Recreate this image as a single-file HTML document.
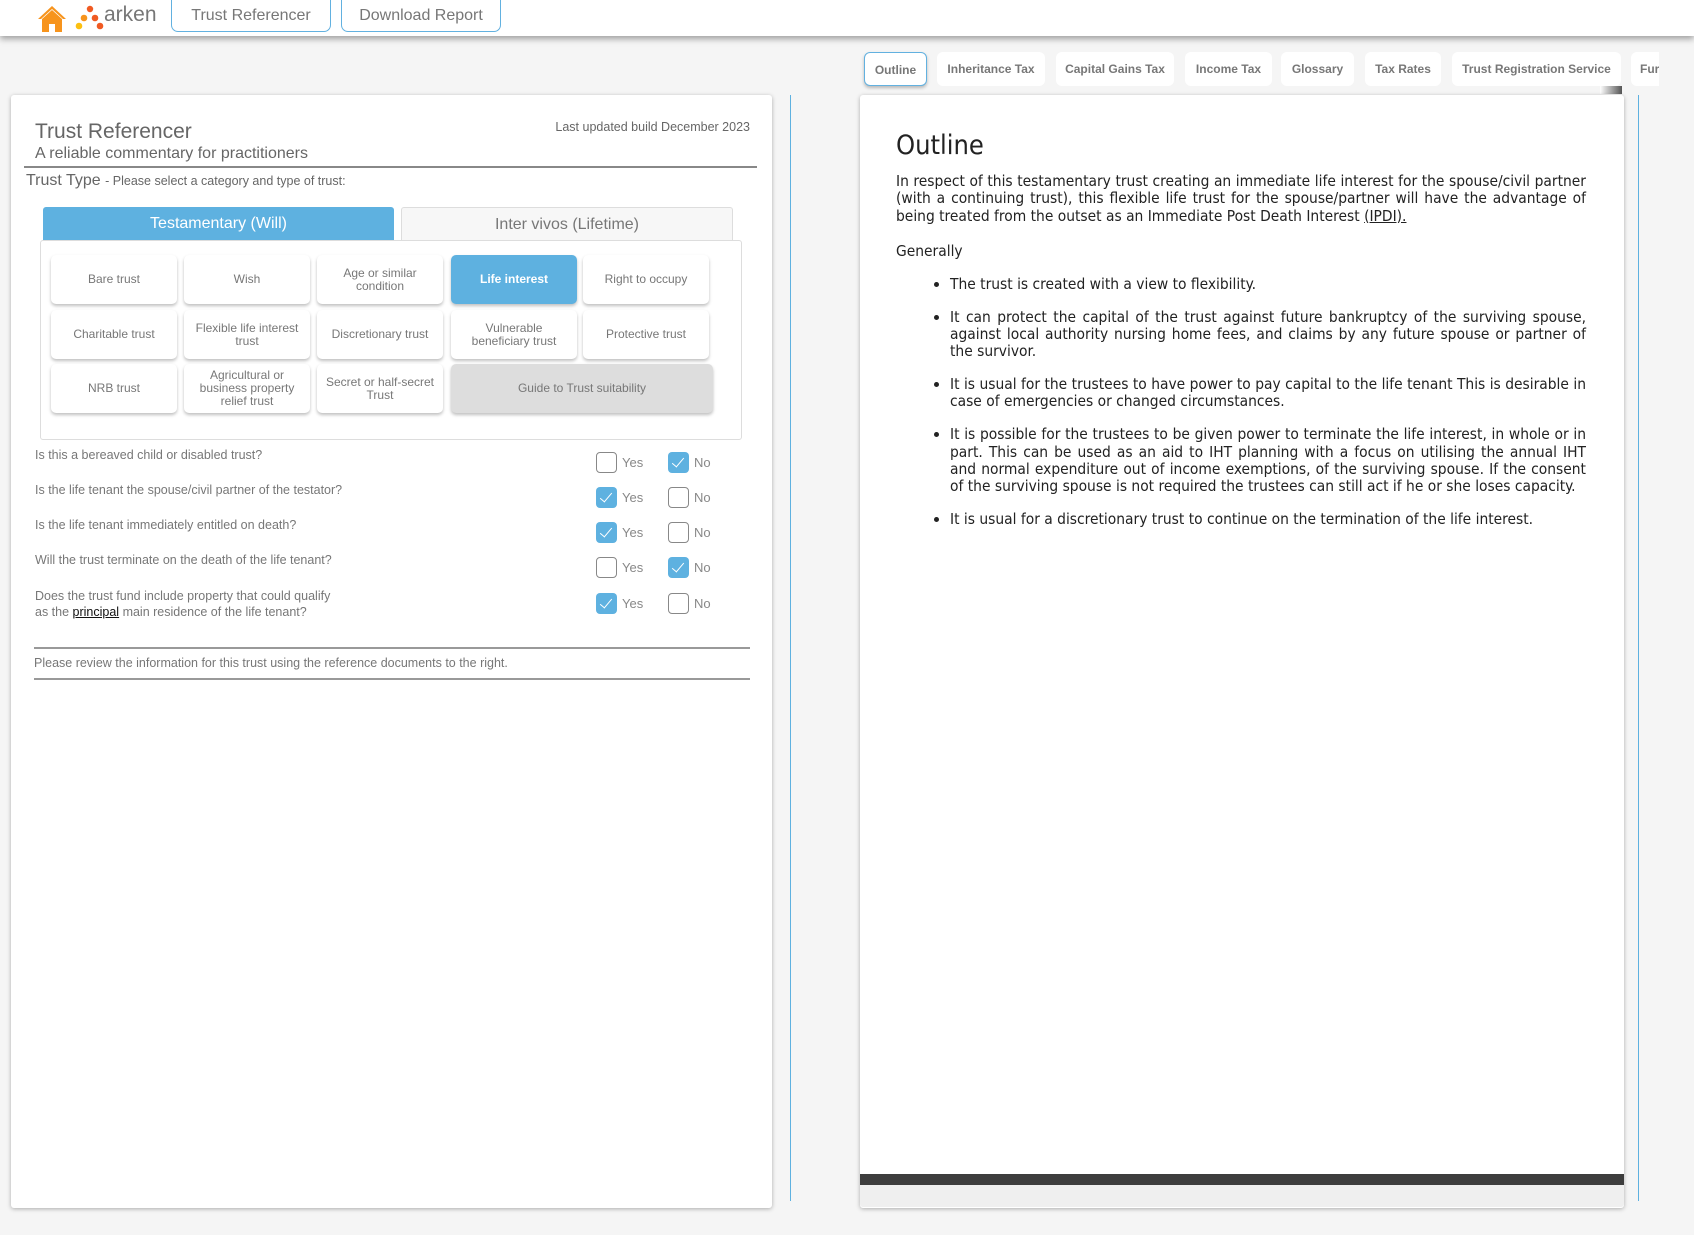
<!DOCTYPE html>
<html><head><meta charset="utf-8"><style>
*{box-sizing:border-box;margin:0;padding:0}
body{width:1694px;height:1235px;background:#f5f5f5;font-family:"Liberation Sans",Arial,sans-serif;position:relative;overflow:hidden;color:#666}
.abs{position:absolute}
.hdr{left:0;top:0;width:1694px;height:36px;background:#fff;box-shadow:0 3px 6px rgba(0,0,0,.35)}
.hb{top:0;height:32px;border:1px solid #62b1e0;border-radius:0 0 7px 7px;border-top:none;font-size:16px;color:#777;text-align:center;line-height:31px;background:#fff}
.panel{background:#fff;box-shadow:0 1px 4px rgba(0,0,0,.3);border-radius:3px}
.tb{height:49px;width:126px;background:#fff;border-radius:5px;box-shadow:0 2px 3px rgba(0,0,0,.25);font-size:12px;color:#777;display:flex;align-items:center;justify-content:center;text-align:center;line-height:13px;padding:0 4px}
.q{left:35px;font-size:12.5px;color:#777}
.cb{width:21px;height:21px;border:1.5px solid #888;border-radius:4px;background:#fff}
.cb.on{background:#5eb1e0;border:none}
.cb.on::after{content:"";position:absolute;left:7px;top:3px;width:5px;height:11px;border:solid #fff;border-width:0 1.6px 1.6px 0;transform:rotate(40deg)}
.lbl{font-size:13px;color:#888}
.rt{top:52px;height:34px;background:#fff;border-radius:6px;font-size:12px;font-weight:bold;color:#777;text-align:center;line-height:34px;white-space:nowrap;overflow:hidden}
.doc{font-family:"DejaVu Sans Condensed","Liberation Sans Narrow","DejaVu Sans",sans-serif;color:#222;font-size:15.4px;line-height:17.3px;text-align:justify}
ul.doc{list-style:disc}
ul.doc li{margin-bottom:15.5px}
</style></head><body>
<div class="abs hdr"></div>
<svg class="abs" style="left:37px;top:4px" width="30" height="28" viewBox="0 0 30 28"><path d="M15 2 L1 15 L4 15 L15 5 L26 15 L29 15 Z" fill="#f7941d"/><path d="M5 15 L15 6 L25 15 L25 28 L18 28 L18 20 L12 20 L12 28 L5 28 Z" fill="#f7941d"/></svg>
<svg class="abs" style="left:75px;top:5px" width="30" height="26" viewBox="0 0 30 26"><circle cx="15" cy="4" r="3.2" fill="#f05a22"/><circle cx="9" cy="13" r="3.3" fill="#f7941d"/><circle cx="20" cy="13" r="3.3" fill="#f05a22"/><circle cx="4" cy="21" r="3.3" fill="#fcc010"/><circle cx="25" cy="21" r="3.3" fill="#f05a22"/></svg>
<div class="abs" style="left:104px;top:3px;font-size:21px;color:#777">arken</div>
<div class="abs hb" style="left:171px;width:160px">Trust Referencer</div>
<div class="abs hb" style="left:341px;width:160px">Download Report</div>

<div class="abs panel" style="left:11px;top:95px;width:761px;height:1113px"></div>
<div class="abs" style="left:35px;top:120px;font-size:21px;color:#666">Trust Referencer</div>
<div class="abs" style="left:35px;top:145px;font-size:16px;color:#666">A reliable commentary for practitioners</div>
<div class="abs" style="left:549px;top:120px;font-size:12.5px;color:#666;width:201px;text-align:right;white-space:nowrap">Last updated build December 2023</div>
<div class="abs" style="left:24px;top:166px;width:733px;height:2px;background:#888"></div>
<div class="abs" style="left:26px;top:172px;font-size:16px;color:#666;white-space:nowrap">Trust Type <span style="font-size:12.5px">- Please select a category and type of trust:</span></div>
<div class="abs" style="left:43px;top:207px;width:351px;height:33px;background:#5eb1e0;border-radius:3px 3px 0 0;color:#fff;font-size:16px;text-align:center;line-height:33px">Testamentary (Will)</div>
<div class="abs" style="left:401px;top:207px;width:332px;height:33px;background:#f7f7f7;border:1px solid #ddd;border-bottom:none;border-radius:3px 3px 0 0;color:#777;font-size:16px;text-align:center;line-height:33px">Inter vivos (Lifetime)</div>
<div class="abs" style="left:40px;top:240px;width:702px;height:200px;border:1px solid #ddd;border-radius:3px;background:#fff"></div>
<div class="abs tb" style="left:51px;top:255px">Bare trust</div>
<div class="abs tb" style="left:184px;top:255px">Wish</div>
<div class="abs tb" style="left:317px;top:255px">Age or similar condition</div>
<div class="abs tb" style="left:451px;top:255px;background:#5eb1e0;color:#fff;font-weight:bold">Life interest</div>
<div class="abs tb" style="left:583px;top:255px">Right to occupy</div>
<div class="abs tb" style="left:51px;top:310px">Charitable trust</div>
<div class="abs tb" style="left:184px;top:310px">Flexible life interest trust</div>
<div class="abs tb" style="left:317px;top:310px">Discretionary trust</div>
<div class="abs tb" style="left:451px;top:310px">Vulnerable beneficiary trust</div>
<div class="abs tb" style="left:583px;top:310px">Protective trust</div>
<div class="abs tb" style="left:51px;top:364px">NRB trust</div>
<div class="abs tb" style="left:184px;top:364px">Agricultural or business property relief trust</div>
<div class="abs tb" style="left:317px;top:364px">Secret or half-secret Trust</div>
<div class="abs tb" style="left:451px;top:364px;width:262px;background:#ddd">Guide to Trust suitability</div>

<div class="abs q" style="top:448px">Is this a bereaved child or disabled trust?</div>
<div class="abs q" style="top:483px">Is the life tenant the spouse/civil partner of the testator?</div>
<div class="abs q" style="top:518px">Is the life tenant immediately entitled on death?</div>
<div class="abs q" style="top:553px">Will the trust terminate on the death of the life tenant?</div>
<div class="abs q" style="top:588px;line-height:16px">Does the trust fund include property that could qualify<br>as the <u style="color:#111">principal</u> main residence of the life tenant?</div>

<div class="abs cb" style="left:596px;top:452px"></div><div class="abs lbl" style="left:622px;top:455px">Yes</div>
<div class="abs cb on" style="left:668px;top:452px"></div><div class="abs lbl" style="left:694px;top:455px">No</div>
<div class="abs cb on" style="left:596px;top:487px"></div><div class="abs lbl" style="left:622px;top:490px">Yes</div>
<div class="abs cb" style="left:668px;top:487px"></div><div class="abs lbl" style="left:694px;top:490px">No</div>
<div class="abs cb on" style="left:596px;top:522px"></div><div class="abs lbl" style="left:622px;top:525px">Yes</div>
<div class="abs cb" style="left:668px;top:522px"></div><div class="abs lbl" style="left:694px;top:525px">No</div>
<div class="abs cb" style="left:596px;top:557px"></div><div class="abs lbl" style="left:622px;top:560px">Yes</div>
<div class="abs cb on" style="left:668px;top:557px"></div><div class="abs lbl" style="left:694px;top:560px">No</div>
<div class="abs cb on" style="left:596px;top:593px"></div><div class="abs lbl" style="left:622px;top:596px">Yes</div>
<div class="abs cb" style="left:668px;top:593px"></div><div class="abs lbl" style="left:694px;top:596px">No</div>

<div class="abs" style="left:34px;top:647px;width:716px;height:2px;background:#999"></div>
<div class="abs q" style="left:34px;top:656px;font-size:12.5px">Please review the information for this trust using the reference documents to the right.</div>
<div class="abs" style="left:34px;top:678px;width:716px;height:2px;background:#999"></div>

<div class="abs" style="left:790px;top:95px;width:1px;height:1106px;background:#5eb1e0"></div>
<div class="abs" style="left:1638px;top:95px;width:1px;height:1106px;background:#5eb1e0"></div>

<div class="abs rt" style="left:864px;width:63px;border:1px solid #62b1e0;box-shadow:0 2px 3px rgba(0,0,0,.25)">Outline</div>
<div class="abs rt" style="left:937px;width:108px">Inheritance Tax</div>
<div class="abs rt" style="left:1056px;width:118px">Capital Gains Tax</div>
<div class="abs rt" style="left:1185px;width:87px">Income Tax</div>
<div class="abs rt" style="left:1281px;width:73px">Glossary</div>
<div class="abs rt" style="left:1365px;width:76px">Tax Rates</div>
<div class="abs rt" style="left:1452px;width:169px">Trust Registration Service</div>
<div class="abs rt" style="left:1631px;width:28px;text-align:left;padding-left:9px;border-radius:6px 0 0 6px">Fur</div>
<div class="abs" style="left:1600px;top:86px;width:22px;height:8px;background:linear-gradient(90deg,#fff,#555)"></div>

<div class="abs panel" style="left:860px;top:95px;width:764px;height:1113px"></div>
<div class="abs" style="left:860px;top:1174px;width:764px;height:11px;background:#3d3d3d"></div>
<div class="abs" style="left:860px;top:1185px;width:764px;height:22px;background:#efefef;border-radius:0 0 3px 3px"></div>

<div class="abs doc" style="left:896px;top:130px;font-size:27px;line-height:32px;color:#222">Outline</div>
<div class="abs doc" style="left:896px;top:173px;width:690px">In respect of this testamentary trust creating an immediate life interest for the spouse/civil partner (with a continuing trust), this flexible life trust for the spouse/partner will have the advantage of being treated from the outset as an Immediate Post Death Interest <u>(IPDI).</u></div>
<div class="abs doc" style="left:896px;top:243px">Generally</div>
<ul class="abs doc" style="left:950px;top:276px;width:636px">
<li>The trust is created with a view to flexibility.</li>
<li>It can protect the capital of the trust against future bankruptcy of the surviving spouse, against local authority nursing home fees, and claims by any future spouse or partner of the survivor.</li>
<li>It is usual for the trustees to have power to pay capital to the life tenant This is desirable in case of emergencies or changed circumstances.</li>
<li>It is possible for the trustees to be given power to terminate the life interest, in whole or in part. This can be used as an aid to IHT planning with a focus on utilising the annual IHT and normal expenditure out of income exemptions, of the surviving spouse. If the consent of the surviving spouse is not required the trustees can still act if he or she loses capacity.</li>
<li>It is usual for a discretionary trust to continue on the termination of the life interest.</li>
</ul>
</body></html>
